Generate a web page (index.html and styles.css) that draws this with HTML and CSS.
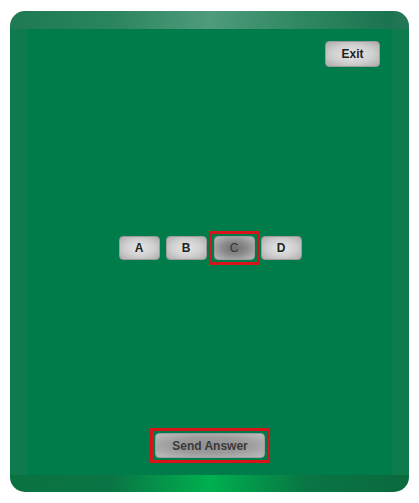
FILE: index.html
```html
<!DOCTYPE html>
<html>
<head>
<meta charset="utf-8">
<link rel="stylesheet" href="styles.css">
</head>
<body>
<div class="frame">
  <div class="panel">
    <div class="top-row">
      <button class="btn btn-exit">Exit</button>
    </div>
    <div class="middle">
      <div class="choices">
        <button class="btn btn-choice">A</button>
        <button class="btn btn-choice">B</button>
        <span class="focus-ring ring-choice"><button class="btn btn-choice btn-selected">C</button></span>
        <button class="btn btn-choice">D</button>
      </div>
    </div>
    <div class="bottom-row">
      <span class="focus-ring"><button class="btn btn-send">Send Answer</button></span>
    </div>
  </div>
</div>
</body>
</html>
```
FILE: styles.css
```css
html, body {
  margin: 0;
  padding: 0;
  background: #ffffff;
}
body {
  font-family: "Liberation Sans", Arial, sans-serif;
}
.frame {
  margin: 11px 0 0 10px;
  width: 399px;
  height: 481px;
  box-sizing: border-box;
  border-radius: 15px;
  padding: 18px 17px 17px 18px;
  background:
    linear-gradient(to right, #1f7a53 0%, #2a845d 25%, #4f9b7c 50%, #2c865f 75%, #1b7450 95%, #27775a 100%) top / 100% 18px no-repeat,
    linear-gradient(to right, #0a7241 0%, #0a7444 25%, #00b04f 50%, #097444 75%, #0a6a3d 100%) bottom / 100% 17px no-repeat,
    #0e7b4d;
}
.panel {
  width: 100%;
  height: 100%;
  box-sizing: border-box;
  background: #007b4a;
  padding: 12px;
  display: flex;
  flex-direction: column;
}
.top-row {
  display: flex;
  justify-content: flex-end;
}
.middle {
  flex: 1;
  display: flex;
  align-items: center;
  justify-content: center;
}
.choices {
  display: flex;
  align-items: center;
  gap: 6px;
}
.bottom-row {
  display: flex;
  justify-content: center;
}
.focus-ring {
  display: flex;
  border: 3px solid #d7141a;
  padding: 2px;
}
.ring-choice {
  margin: -5px -5px -5px -4px;
}
.btn {
  font-family: "Liberation Sans", Arial, sans-serif;
  font-weight: bold;
  font-size: 12px;
  color: #222;
  border: 1px solid #9c9c9c;
  border-radius: 4px;
  padding: 0;
  box-sizing: border-box;
  background: radial-gradient(ellipse at center, #e6e6e6 0%, #cfcfcf 55%, #ababab 100%);
  cursor: pointer;
}
.btn-exit {
  width: 55px;
  height: 26px;
}
.btn-choice {
  width: 41px;
  height: 24px;
}
.btn-selected {
  color: #333;
  font-weight: normal;
  background: radial-gradient(ellipse at center, #6e6e6e 0%, #8c8c8c 45%, #bdbdbd 100%);
}
.btn-send {
  width: 110px;
  height: 25px;
  color: #3a3a3a;
  background: radial-gradient(ellipse at center, #8e8e8e 0%, #9c9c9c 50%, #bdbdbd 100%);
}
```
